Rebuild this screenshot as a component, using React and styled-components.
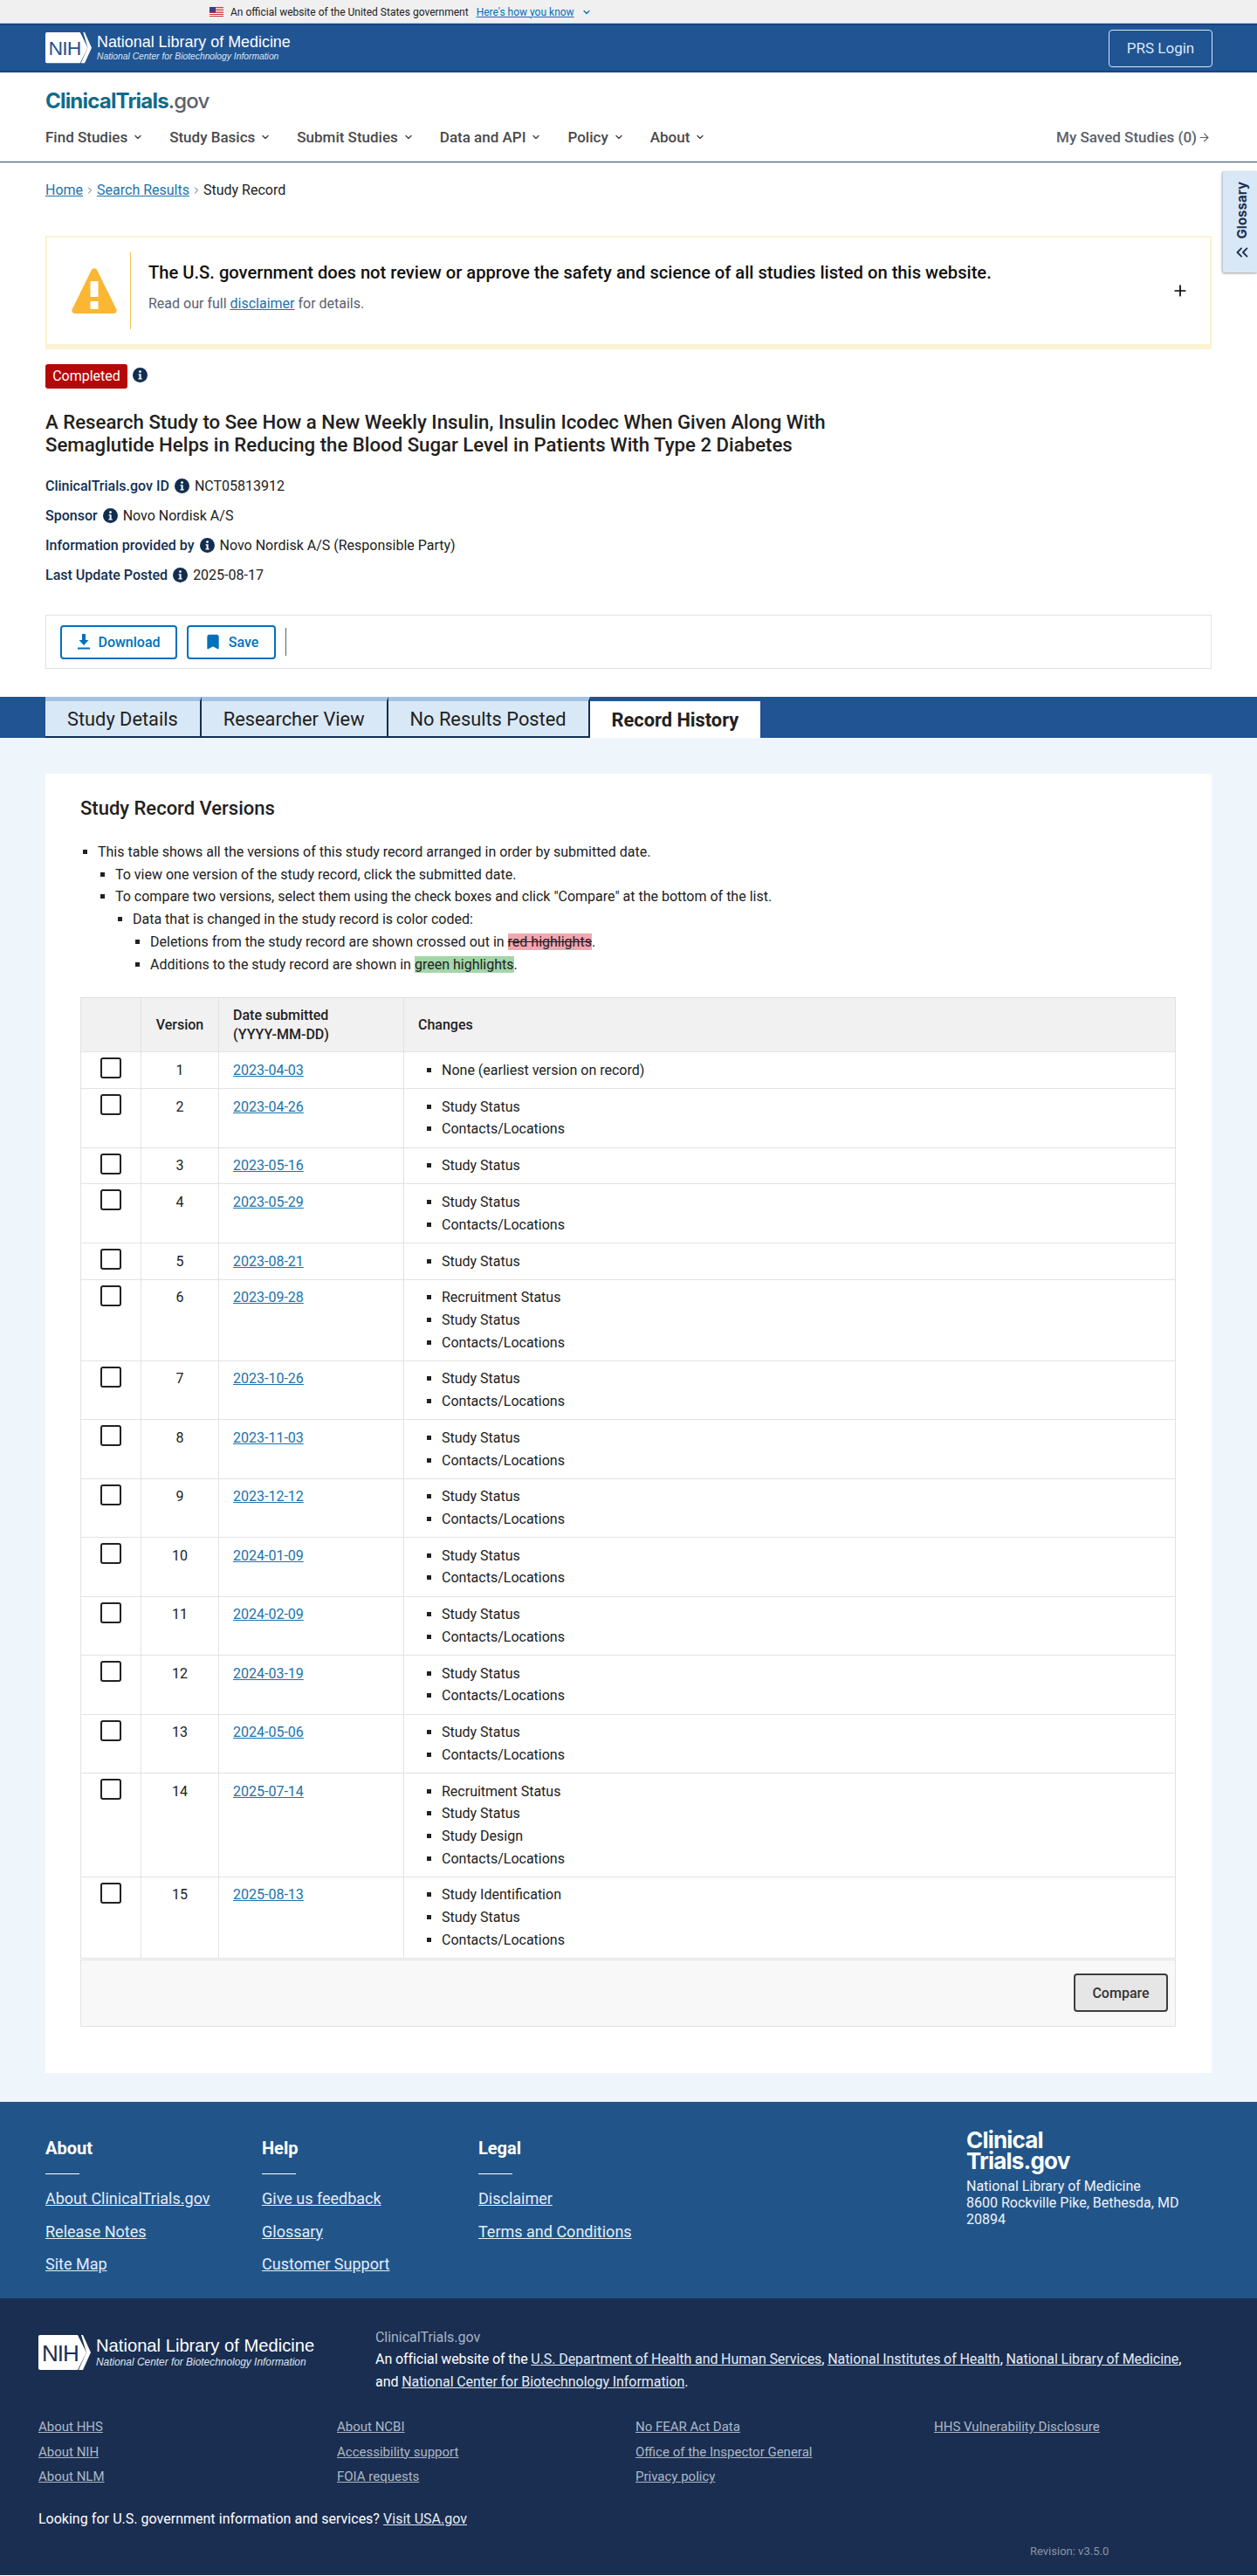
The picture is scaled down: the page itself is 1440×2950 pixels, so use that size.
import styled, { createGlobalStyle } from "styled-components";
import { ChevronDown, ChevronsLeft, ArrowRight, Plus, Bookmark, ChevronRight } from "lucide-react";

const versions = [
  { date: "2023-04-03", changes: ["None (earliest version on record)"] },
  { date: "2023-04-26", changes: ["Study Status", "Contacts/Locations"] },
  { date: "2023-05-16", changes: ["Study Status"] },
  { date: "2023-05-29", changes: ["Study Status", "Contacts/Locations"] },
  { date: "2023-08-21", changes: ["Study Status"] },
  { date: "2023-09-28", changes: ["Recruitment Status", "Study Status", "Contacts/Locations"] },
  { date: "2023-10-26", changes: ["Study Status", "Contacts/Locations"] },
  { date: "2023-11-03", changes: ["Study Status", "Contacts/Locations"] },
  { date: "2023-12-12", changes: ["Study Status", "Contacts/Locations"] },
  { date: "2024-01-09", changes: ["Study Status", "Contacts/Locations"] },
  { date: "2024-02-09", changes: ["Study Status", "Contacts/Locations"] },
  { date: "2024-03-19", changes: ["Study Status", "Contacts/Locations"] },
  { date: "2024-05-06", changes: ["Study Status", "Contacts/Locations"] },
  { date: "2025-07-14", changes: ["Recruitment Status", "Study Status", "Study Design", "Contacts/Locations"] },
  { date: "2025-08-13", changes: ["Study Identification", "Study Status", "Contacts/Locations"] },
];

const navItems = ["Find Studies", "Study Basics", "Submit Studies", "Data and API", "Policy", "About"];
const tabs = ["Study Details", "Researcher View", "No Results Posted", "Record History"];

const footerColumns = [
  { title: "About", links: ["About ClinicalTrials.gov", "Release Notes", "Site Map"] },
  { title: "Help", links: ["Give us feedback", "Glossary", "Customer Support"] },
  { title: "Legal", links: ["Disclaimer", "Terms and Conditions"] },
];

const bottomLinks = [
  ["About HHS", "About NIH", "About NLM"],
  ["About NCBI", "Accessibility support", "FOIA requests"],
  ["No FEAR Act Data", "Office of the Inspector General", "Privacy policy"],
  ["HHS Vulnerability Disclosure"],
];

const NihLogo = ({ width, ink }) => (
  <svg width={width} viewBox="0 0 60 40" aria-hidden="true">
    <path d="M2 0H45L55 20L45 40H2a2 2 0 0 1-2-2V2a2 2 0 0 1 2-2Z" fill="#fff" />
    <path d="M49 0H51L60 20L51 40H46L55 20Z" fill="#fff" />
    <text x="4" y="30" fontFamily="Liberation Sans, sans-serif" fontSize="26" letterSpacing="-1" fill={ink}>
      NIH
    </text>
  </svg>
);

const InfoIcon = () => (
  <svg width="17" height="17" viewBox="0 0 17 17" aria-hidden="true">
    <circle cx="8.5" cy="8.5" r="8.5" fill="#112e51" />
    <circle cx="8.5" cy="4.6" r="1.4" fill="#fff" />
    <path d="M6.6 7.2h3v5h1.1v1.3H6.4v-1.3h1.2V8.5h-1Z" fill="#fff" />
  </svg>
);

const WarningIcon = () => (
  <svg width="52" height="52" viewBox="0 0 52 52" aria-hidden="true">
    <path
      d="M22.7 2.6c1.6-3 5-3 6.600 0l22 44.400c1 2.300-.2 5-3 5H3.700c-2.800 0-4-2.700-3-5Z"
      fill="#fbb733"
    />
    <rect x="21.500" y="15" width="9" height="18" fill="#fff" />
    <rect x="21.500" y="38" width="9" height="9" fill="#fff" />
  </svg>
);

const FlagIcon = () => (
  <svg width="16" height="11" viewBox="0 0 16 11" aria-hidden="true">
    <rect width="16" height="11" fill="#fff" />
    {[0, 2, 4, 6, 8, 10].map((y) => (
      <rect key={y} y={y} width="16" height="1" fill="#c8313e" />
    ))}
    <rect width="7" height="6" fill="#3b3b8f" />
  </svg>
);

const DownloadIcon = () => (
  <svg width="16" height="18" viewBox="0 0 16 18" aria-hidden="true">
    <path d="M6 0h4v7h3.500L8 13 2.500 7H6Z" fill="#0071bc" />
    <rect x="1" y="15.500" width="14" height="2" fill="#0071bc" />
  </svg>
);

const App = () => (
  <Page>
    <GlobalStyle />
    <GovBanner>
      <FlagIcon />
      <span>An official website of the United States government</span>
      <GovLink>Here's how you know</GovLink>
      <ChevronDown size={12} color="#0071bc" strokeWidth={2.5} />
    </GovBanner>

    <TopBar>
      <LogoRow>
        <NihLogo width={53} ink="#205493" />
        <LogoText>
          <LogoTitle>National Library of Medicine</LogoTitle>
          <LogoSub>National Center for Biotechnology Information</LogoSub>
        </LogoText>
      </LogoRow>
      <LoginButton>PRS Login</LoginButton>
    </TopBar>

    <SiteHeader>
      <Brand>
        ClinicalTrials<BrandGov>.gov</BrandGov>
      </Brand>
      <NavRow>
        <NavList>
          {navItems.map((item) => (
            <NavItem key={item}>
              {item}
              <ChevronDown size={12} strokeWidth={3} />
            </NavItem>
          ))}
        </NavList>
        <SavedLink>
          My Saved Studies (0)
          <ArrowRight size={15} strokeWidth={1.75} />
        </SavedLink>
      </NavRow>
    </SiteHeader>

    <GlossaryTab>
      <GlossaryLabel>Glossary</GlossaryLabel>
      <ChevronsLeft size={22} strokeWidth={2} color="#1a2e51" />
    </GlossaryTab>

    <Intro>
      <Breadcrumb>
        <TextLink>Home</TextLink>
        <ChevronRight size={12} color="#5b616b" />
        <TextLink>Search Results</TextLink>
        <ChevronRight size={12} color="#5b616b" />
        <span>Study Record</span>
      </Breadcrumb>

      <Alert>
        <AlertIcon>
          <WarningIcon />
        </AlertIcon>
        <AlertBody>
          <AlertTitle>
            The U.S. government does not review or approve the safety and science of all studies listed on this
            website.
          </AlertTitle>
          <AlertText>
            Read our full <TextLink>disclaimer</TextLink> for details.
          </AlertText>
        </AlertBody>
        <Plus size={20} strokeWidth={2} color="#000" />
      </Alert>

      <StatusRow>
        <StatusBadge>Completed</StatusBadge>
        <InfoIcon />
      </StatusRow>

      <StudyTitle>
        A Research Study to See How a New Weekly Insulin, Insulin Icodec When Given Along With Semaglutide Helps in
        Reducing the Blood Sugar Level in Patients With Type 2 Diabetes
      </StudyTitle>

      <MetaList>
        <MetaRow>
          <MetaLabel>ClinicalTrials.gov ID</MetaLabel>
          <InfoIcon />
          <span>NCT05813912</span>
        </MetaRow>
        <MetaRow>
          <MetaLabel>Sponsor</MetaLabel>
          <InfoIcon />
          <span>Novo Nordisk A/S</span>
        </MetaRow>
        <MetaRow>
          <MetaLabel>Information provided by</MetaLabel>
          <InfoIcon />
          <span>Novo Nordisk A/S (Responsible Party)</span>
        </MetaRow>
        <MetaRow>
          <MetaLabel>Last Update Posted</MetaLabel>
          <InfoIcon />
          <span>2025-08-17</span>
        </MetaRow>
      </MetaList>

      <ActionBar>
        <ActionButton $width={134}>
          <DownloadIcon />
          Download
        </ActionButton>
        <ActionButton $width={102}>
          <Bookmark size={20} fill="#0071bc" color="#0071bc" />
          Save
        </ActionButton>
        <ActionDivider />
      </ActionBar>
    </Intro>

    <TabBand>
      {tabs.map((tab, i) => (
        <Tab key={tab} $active={i === tabs.length - 1}>
          {tab}
        </Tab>
      ))}
    </TabBand>

    <Content>
      <Card>
        <CardTitle>Study Record Versions</CardTitle>
        <InfoList>
          <li>
            This table shows all the versions of this study record arranged in order by submitted date.
            <ul>
              <li>To view one version of the study record, click the submitted date.</li>
              <li>
                To compare two versions, select them using the check boxes and click "Compare" at the bottom of the
                list.
                <ul>
                  <li>
                    Data that is changed in the study record is color coded:
                    <ul>
                      <li>
                        Deletions from the study record are shown crossed out in <Removed>red highlights</Removed>.
                      </li>
                      <li>
                        Additions to the study record are shown in <Added>green highlights</Added>.
                      </li>
                    </ul>
                  </li>
                </ul>
              </li>
            </ul>
          </li>
        </InfoList>

        <VersionTable>
          <colgroup>
            <col width="69" />
            <col width="89" />
            <col width="212" />
            <col />
          </colgroup>
          <thead>
            <tr>
              <HeadCell />
              <HeadCell $center>Version</HeadCell>
              <HeadCell>
                Date submitted
                <br />
                (YYYY-MM-DD)
              </HeadCell>
              <HeadCell>Changes</HeadCell>
            </tr>
          </thead>
          <tbody>
            {versions.map((version, i) => (
              <tr key={version.date}>
                <CheckCell>
                  <CheckBox />
                </CheckCell>
                <BodyCell $center>{i + 1}</BodyCell>
                <BodyCell>
                  <TextLink>{version.date}</TextLink>
                </BodyCell>
                <BodyCell>
                  <ChangeList>
                    {version.changes.map((change) => (
                      <li key={change}>{change}</li>
                    ))}
                  </ChangeList>
                </BodyCell>
              </tr>
            ))}
          </tbody>
          <tfoot>
            <tr>
              <FootCell colSpan={4}>
                <CompareButton>Compare</CompareButton>
              </FootCell>
            </tr>
          </tfoot>
        </VersionTable>
      </Card>
    </Content>

    <SiteFooter>
      <FooterColumns>
        {footerColumns.map((column) => (
          <FooterColumn key={column.title}>
            <FooterHeading>{column.title}</FooterHeading>
            <FooterRule />
            {column.links.map((link) => (
              <FooterLink key={link}>{link}</FooterLink>
            ))}
          </FooterColumn>
        ))}
      </FooterColumns>
      <FooterAddress>
        <FooterBrand>
          Clinical
          <br />
          Trials.gov
        </FooterBrand>
        <AddressText>
          National Library of Medicine
          <br />
          8600 Rockville Pike, Bethesda, MD 20894
        </AddressText>
      </FooterAddress>
    </SiteFooter>

    <AgencyFooter>
      <AgencyTop>
        <AgencyLogo>
          <NihLogo width={60} ink="#1a2e51" />
          <LogoText>
            <LogoTitle $large>National Library of Medicine</LogoTitle>
            <LogoSub $large>National Center for Biotechnology Information</LogoSub>
          </LogoText>
        </AgencyLogo>
        <AgencyText>
          <AgencyName>ClinicalTrials.gov</AgencyName>
          An official website of the <AgencyLink>U.S. Department of Health and Human Services</AgencyLink>,{" "}
          <AgencyLink>National Institutes of Health</AgencyLink>, <AgencyLink>National Library of Medicine</AgencyLink>,
          <br />
          and <AgencyLink>National Center for Biotechnology Information</AgencyLink>.
        </AgencyText>
      </AgencyTop>
      <LinkGrid>
        {bottomLinks.map((column) => (
          <LinkColumn key={column[0]}>
            {column.map((link) => (
              <SmallLink key={link}>{link}</SmallLink>
            ))}
          </LinkColumn>
        ))}
      </LinkGrid>
      <UsaLine>
        Looking for U.S. government information and services? <AgencyLink>Visit USA.gov</AgencyLink>
      </UsaLine>
      <Revision>Revision: v3.5.0</Revision>
    </AgencyFooter>
  </Page>
);

const GlobalStyle = createGlobalStyle`
  html, body {
    margin: 0;
    padding: 0;
    background: #fff;
  }
  body {
    font-family: Roboto, "Liberation Sans", sans-serif;
    font-size: 16px;
    color: #212121;
  }
  * {
    box-sizing: border-box;
  }
`;

const Page = styled.div`
  position: relative;
  width: 1440px;
  height: 2950px;
  overflow: hidden;
`;

const GovBanner = styled.div`
  height: 27px;
  padding: 1px 0 0 240px;
  display: flex;
  align-items: center;
  gap: 8px;
  background: #f0f0f0;
  border-bottom: 1px solid #b5d3ea;
  font-size: 12px;
  color: #212121;
`;

const GovLink = styled.a`
  margin-left: 1px;
  color: #0071bc;
  text-decoration: underline;
`;

const TopBar = styled.div`
  height: 56px;
  padding: 0 51px 0 52px;
  display: flex;
  align-items: center;
  justify-content: space-between;
  background: #205493;
  border-top: 2px solid #1a4480;
  border-bottom: 2px solid #1a4480;
`;

const LogoRow = styled.div`
  display: flex;
  align-items: center;
  gap: 6px;
`;

const LogoText = styled.div`
  display: flex;
  flex-direction: column;
  font-family: "Liberation Sans", Arial, sans-serif;
  color: #fff;
`;

const LogoTitle = styled.span`
  font-size: ${({ $large }) => ($large ? "20.2px" : "17.9px")};
  line-height: ${({ $large }) => ($large ? "23px" : "20px")};
`;

const LogoSub = styled.span`
  font-size: ${({ $large }) => ($large ? "11.9px" : "10.300px")};
  line-height: ${({ $large }) => ($large ? "15px" : "13px")};
  font-style: italic;
  color: #dce6f2;
`;

const LoginButton = styled.button`
  width: 119px;
  height: 43px;
  background: transparent;
  border: 1px solid #d9e8f6;
  border-radius: 4px;
  font-family: inherit;
  font-size: 17px;
  color: #d9e8f6;
`;

const SiteHeader = styled.header`
  height: 103px;
  padding: 17px 52px 0;
  border-bottom: 1.5px solid #27486b;
`;

const Brand = styled.div`
  font-family: Inter, Lato, sans-serif;
  font-size: 24px;
  line-height: 32px;
  font-weight: 700;
  letter-spacing: -0.8px;
  color: #0f6b8c;
`;

const BrandGov = styled.span`
  font-weight: 500;
  color: #5b616b;
`;

const NavRow = styled.nav`
  margin-top: 13px;
  display: flex;
  justify-content: space-between;
  align-items: center;
`;

const NavList = styled.div`
  display: flex;
  gap: 30px;
`;

const NavItem = styled.span`
  display: flex;
  align-items: center;
  gap: 6px;
  font-size: 17px;
  font-weight: 500;
  line-height: 24px;
  color: #4a4a4a;
`;

const SavedLink = styled.span`
  display: flex;
  align-items: center;
  gap: 1px;
  margin-right: 1px;
  font-size: 17px;
  font-weight: 500;
  line-height: 24px;
  color: #5b616b;
`;

const GlossaryTab = styled.div`
  position: absolute;
  top: 196px;
  right: 0;
  width: 40px;
  height: 116px;
  padding: 12px 0 0 4px;
  display: flex;
  flex-direction: column;
  align-items: center;
  gap: 5px;
  background: #d9e8f6;
  border-left: 1px solid #c4cdd8;
  box-shadow: 0 1px 3px rgba(0, 0, 0, 0.4);
  border-radius: 3px 0 0 3px;
`;

const GlossaryLabel = styled.span`
  writing-mode: vertical-rl;
  transform: rotate(180deg);
  font-family: Inter, sans-serif;
  font-size: 15px;
  font-weight: 700;
  color: #1a2e51;
`;

const Intro = styled.section`
  padding: 20px 52px 0;
`;

const Breadcrumb = styled.div`
  display: flex;
  align-items: center;
  gap: 2px;
  font-size: 16px;
  line-height: 24px;
`;

const TextLink = styled.a`
  color: #1a73ad;
  text-decoration: underline;
`;

const Alert = styled.div`
  margin-top: 40px;
  height: 130px;
  padding: 16px 24px 17px 28px;
  display: flex;
  align-items: center;
  border: 2px solid #faf3d1;
  border-bottom-width: 6px;
`;

const AlertIcon = styled.div`
  width: 68px;
  height: 88px;
  margin-right: 20px;
  display: flex;
  align-items: center;
  border-right: 1px solid #f2c14e;
`;

const AlertBody = styled.div`
  flex: 1;
  align-self: flex-start;
  padding-top: 11px;
`;

const AlertTitle = styled.div`
  font-size: 20.160px;
  font-weight: 500;
  line-height: 26px;
  color: #111;
`;

const AlertText = styled.div`
  margin-top: 10px;
  font-size: 16px;
  line-height: 26px;
  color: #5b616b;
`;

const StatusRow = styled.div`
  margin-top: 17px;
  display: flex;
  align-items: flex-start;
  gap: 6px;

  svg {
    margin-top: 4px;
  }
`;

const StatusBadge = styled.span`
  width: 94px;
  height: 28px;
  background: #b50909;
  border-radius: 3px;
  text-align: center;
  font-size: 16px;
  line-height: 28px;
  color: #fff;
`;

const StudyTitle = styled.h1`
  width: 920px;
  margin: 25px 0 0;
  font-size: 22.200px;
  font-weight: 500;
  line-height: 26px;
  color: #212121;
`;

const MetaList = styled.div`
  margin-top: 22px;
  display: flex;
  flex-direction: column;
  gap: 10px;
`;

const MetaRow = styled.div`
  height: 24px;
  display: flex;
  align-items: center;
  gap: 6px;
  font-size: 16px;
`;

const MetaLabel = styled.span`
  font-weight: 500;
  color: #112e51;
`;

const ActionBar = styled.div`
  height: 62px;
  margin-top: 34px;
  padding: 0 16px;
  display: flex;
  align-items: center;
  gap: 11px;
  border: 1px solid #e4e2e0;
`;

const ActionButton = styled.button`
  width: ${({ $width }) => $width}px;
  height: 39px;
  display: flex;
  align-items: center;
  justify-content: center;
  gap: 8px;
  background: #fff;
  border: 2px solid #0071bc;
  border-radius: 4px;
  font-family: inherit;
  font-size: 16px;
  font-weight: 500;
  color: #0071bc;
`;

const ActionDivider = styled.span`
  width: 1px;
  height: 32px;
  background: #5b616b;
`;

const TabBand = styled.div`
  height: 47px;
  margin-top: 32px;
  padding-left: 52px;
  display: flex;
  background: #205493;
`;

const Tab = styled.div`
  padding: 0 25px;
  display: flex;
  align-items: center;
  background: ${({ $active }) => ($active ? "#fff" : "#d9e8f6")};
  border-top: ${({ $active }) => ($active ? "5px solid #205493" : "5px solid #a4c3e3")};
  border-right: ${({ $active }) => ($active ? "none" : "2px solid #112e51")};
  border-bottom: ${({ $active }) => ($active ? "none" : "2px solid #112e51")};
  font-size: 21.800px;
  font-weight: ${({ $active }) => ($active ? 700 : 400)};
  color: #212121;
`;

const Content = styled.main`
  height: 1562px;
  padding: 41px 52px 0;
  background: #eef5fb;
`;

const Card = styled.div`
  height: 1488px;
  padding: 25px 40px 0;
  background: #fff;
`;

const CardTitle = styled.h2`
  margin: 0;
  font-size: 22px;
  font-weight: 500;
  line-height: 30px;
  color: #212121;
`;

const InfoList = styled.ul`
  margin: 22px 0 0;
  padding-left: 20px;
  font-size: 16px;
  line-height: 25.700px;
  list-style: square;

  ul {
    margin: 0;
    padding-left: 20px;
    list-style: square;
  }
`;

const Removed = styled.span`
  background: #f4a6b0;
  text-decoration: line-through;
`;

const Added = styled.span`
  background: #a3d6a8;
`;

const VersionTable = styled.table`
  width: 1255px;
  margin-top: 25px;
  border-collapse: collapse;
  table-layout: fixed;
  border: 1px solid #e4e2e0;
`;

const HeadCell = styled.th`
  height: 62px;
  padding: 0 16px;
  background: #f1f1f1;
  border-left: 1px solid #e4e2e0;
  font-size: 16px;
  font-weight: 500;
  line-height: 22px;
  text-align: ${({ $center }) => ($center ? "center" : "left")};
  color: #212121;
`;

const BodyCell = styled.td`
  padding: 7.650px 16px;
  vertical-align: top;
  border-left: 1px solid #e4e2e0;
  border-top: 1px solid #e4e2e0;
  font-size: 16px;
  line-height: 25.600px;
  text-align: ${({ $center }) => ($center ? "center" : "left")};
`;

const CheckCell = styled(BodyCell)`
  padding: 6px 0 0 22px;
`;

const CheckBox = styled.span`
  display: block;
  width: 24px;
  height: 24px;
  background: #fff;
  border: 2px solid #212121;
  border-radius: 3px;
`;

const ChangeList = styled.ul`
  margin: 0;
  padding-left: 27px;
  list-style: square;
`;

const FootCell = styled.td`
  height: 77px;
  padding: 0 8px 0 0;
  background: #f8f8f8;
  border-top: 3px double #e4e2e0;
  text-align: right;
`;

const CompareButton = styled.button`
  width: 108px;
  height: 44px;
  background: #e6e6e6;
  border: 2px solid #3d3d3d;
  border-radius: 4px;
  font-family: inherit;
  font-size: 16px;
  font-weight: 500;
  color: #333;
`;

const SiteFooter = styled.footer`
  height: 225px;
  padding: 40px 52px 0;
  display: flex;
  justify-content: space-between;
  background: #21558a;
  color: #fff;
`;

const FooterColumns = styled.div`
  display: flex;
`;

const FooterColumn = styled.div`
  width: 248px;
  display: flex;
  flex-direction: column;
  align-items: flex-start;
`;

const FooterHeading = styled.h3`
  margin: 0;
  font-size: 20px;
  font-weight: 700;
  line-height: 26px;
`;

const FooterRule = styled.span`
  width: 39px;
  height: 1px;
  margin: 16px 0 16px;
  background: #fff;
`;

const FooterLink = styled.a`
  margin-bottom: 13px;
  font-size: 18px;
  line-height: 24.500px;
  color: #e4edf7;
  text-decoration: underline;
`;

const FooterAddress = styled.div`
  width: 281px;
  margin-top: -8px;
  padding-right: 20px;
`;

const FooterBrand = styled.div`
  font-family: Inter, sans-serif;
  font-size: 26px;
  font-weight: 700;
  line-height: 24px;
  letter-spacing: -0.8px;
`;

const AddressText = styled.div`
  margin-top: 7px;
  font-size: 16px;
  line-height: 19px;
  color: #eef3f9;
`;

const AgencyFooter = styled.div`
  position: relative;
  height: 317px;
  padding: 33px 44px 0;
  background: #1a2e51;
  color: #fff;
`;

const AgencyTop = styled.div`
  display: flex;
  align-items: flex-start;
`;

const AgencyLogo = styled.div`
  width: 386px;
  margin-top: 9px;
  display: flex;
  align-items: center;
  gap: 6px;
`;

const AgencyText = styled.div`
  width: 960px;
  font-size: 16px;
  line-height: 26px;
  word-spacing: -0.2px;
  letter-spacing: -0.05px;
`;

const AgencyName = styled.div`
  line-height: 24px;
  color: #a9b3c1;
`;

const AgencyLink = styled.a`
  color: #e4edf7;
  text-decoration: underline;
`;

const LinkGrid = styled.div`
  margin-top: 28px;
  display: grid;
  grid-template-columns: repeat(4, 342px);
`;

const LinkColumn = styled.div`
  display: flex;
  flex-direction: column;
  align-items: flex-start;
  gap: 7.500px;
`;

const SmallLink = styled.a`
  font-size: 15px;
  line-height: 21px;
  color: #aeb8c6;
  text-decoration: underline;
`;

const UsaLine = styled.div`
  margin-top: 26px;
  font-size: 16px;
  line-height: 24px;
  word-spacing: 0.2px;
`;

const Revision = styled.div`
  position: absolute;
  top: 282px;
  left: 1180px;
  font-size: 13px;
  line-height: 16px;
  color: #8a95a5;
`;

export default App;
